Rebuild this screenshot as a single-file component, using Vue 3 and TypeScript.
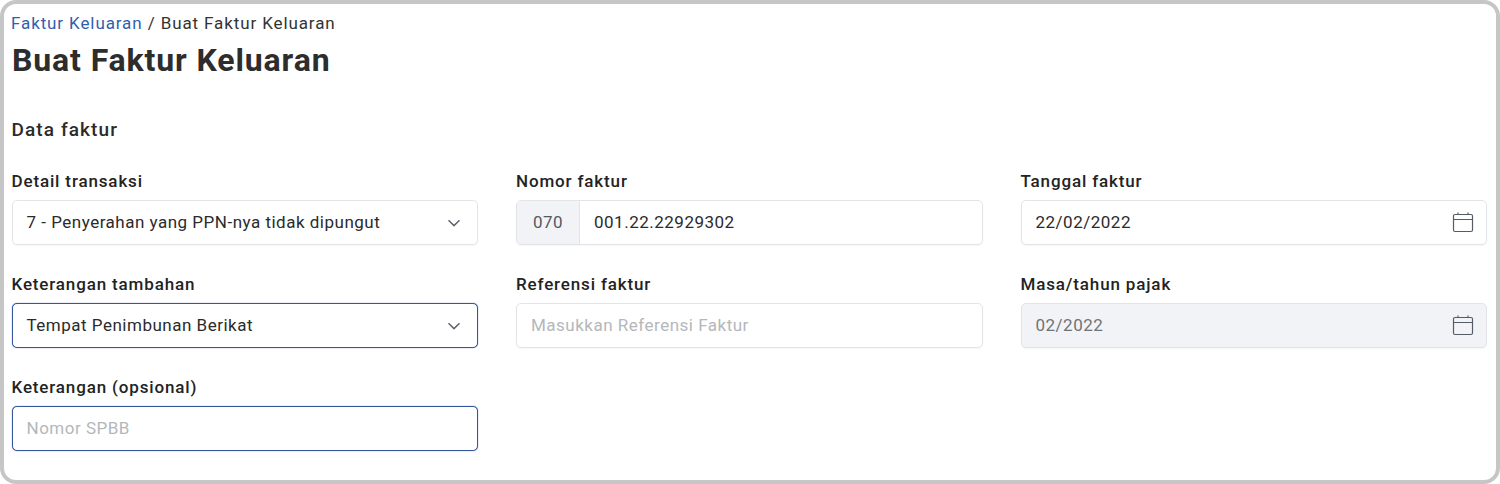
<script setup lang="ts">
interface Field {
  label: string
  value: string
  kind: 'select' | 'prefix' | 'date' | 'input'
  placeholder?: boolean
  focused?: boolean
  disabled?: boolean
  prefix?: string
}

const fields: Field[] = [
  { label: 'Detail transaksi', value: '7 - Penyerahan yang PPN-nya tidak dipungut', kind: 'select' },
  { label: 'Nomor faktur', value: '001.22.22929302', kind: 'prefix', prefix: '070' },
  { label: 'Tanggal faktur', value: '22/02/2022', kind: 'date' },
  { label: 'Keterangan tambahan', value: 'Tempat Penimbunan Berikat', kind: 'select', focused: true },
  { label: 'Referensi faktur', value: 'Masukkan Referensi Faktur', kind: 'input', placeholder: true },
  { label: 'Masa/tahun pajak', value: '02/2022', kind: 'date', disabled: true },
  { label: 'Keterangan (opsional)', value: 'Nomor SPBB', kind: 'input', placeholder: true, focused: true },
]
</script>

<template>
  <div class="frame">
    <nav class="crumbs"><span class="link">Faktur Keluaran</span> / Buat Faktur Keluaran</nav>
    <h1 class="title">Buat Faktur Keluaran</h1>
    <h2 class="section">Data faktur</h2>
    <div class="grid">
      <div v-for="f in fields" :key="f.label" class="field">
        <label class="label">{{ f.label }}</label>
        <div class="control" :class="{ focused: f.focused, disabled: f.disabled }">
          <span v-if="f.prefix" class="prefix">{{ f.prefix }}</span>
          <span class="value" :class="{ placeholder: f.placeholder }">{{ f.value }}</span>
          <svg v-if="f.kind === 'select'" class="chevron" viewBox="0 0 14 8" fill="none">
            <path d="M1.5 1.2 7 6.6l5.5-5.4" stroke="#5f6670" stroke-width="1.5" />
          </svg>
          <svg v-if="f.kind === 'date'" class="calendar" viewBox="0 0 22 21" fill="none">
            <path d="M3 2.5h16a1.5 1.5 0 0 1 1.5 1.5v14a1.5 1.5 0 0 1-1.5 1.5H3A1.5 1.5 0 0 1 1.5 18V4A1.5 1.5 0 0 1 3 2.5ZM1.5 7.5h19M6 .5v2M16 .5v2" stroke="#565c66" stroke-width="1.2" />
          </svg>
        </div>
      </div>
    </div>
  </div>
</template>

<style>
html, body { margin: 0; background: #fff; }
</style>

<style scoped>
.frame {
  box-sizing: border-box;
  width: 1500px;
  height: 484px;
  border: 4px solid #c6c6c6;
  border-radius: 16px;
  padding: 8px 9px 0 8px;
  background: #fff;
  font-family: Roboto, "Liberation Sans", sans-serif;
  color: #2b2b2b;
  overflow: hidden;
}
.crumbs {
  margin-left: -1px;
  font-size: 17px;
  line-height: 22px;
  letter-spacing: 0.89px;
  color: #333;
}
.link { color: #2f5fae; }
.title {
  margin: 5px 0 0;
  font-size: 32px;
  line-height: 42px;
  font-weight: 700;
  letter-spacing: 0.88px;
  color: #2d2d2d;
}
.section {
  margin: 35px 0 0 -0.5px;
  font-size: 19px;
  line-height: 28px;
  font-weight: 500;
  letter-spacing: 1.1px;
  color: #2b2b2b;
}
.grid {
  margin: 27px 0 0 -0.5px;
  display: grid;
  grid-template-columns: repeat(3, 1fr);
  column-gap: 38px;
  row-gap: 29px;
}
.field { display: flex; flex-direction: column; gap: 9px; }
.label {
  font-size: 17px;
  line-height: 20px;
  font-weight: 500;
  letter-spacing: 0.85px;
  color: #232323;
}
.control {
  box-sizing: border-box;
  height: 45px;
  display: flex;
  align-items: center;
  border: 1px solid #e2e4e8;
  border-radius: 5px;
  background: #fff;
  box-shadow: 0 1px 2px rgba(0, 0, 0, 0.04);
  overflow: hidden;
}
.control.focused { border-color: #35589c; box-shadow: 0 0 1px #35589c; }
.control.disabled { background: #f2f3f6; }
.control.disabled .value { color: #6f7378; }
.prefix {
  align-self: stretch;
  width: 63px;
  flex: none;
  display: flex;
  align-items: center;
  justify-content: center;
  padding-bottom: 2px;
  box-sizing: border-box;
  background: #f2f3f6;
  border-right: 1px solid #e2e4e8;
  font-size: 17px;
  letter-spacing: 0.5px;
  color: #555a60;
}
.value {
  flex: 1;
  padding: 0 0 2px 14px;
  font-size: 17px;
  letter-spacing: 0.5px;
  color: #2b2b2b;
  white-space: nowrap;
}
.value.placeholder { color: #b4b7bb; }
.chevron { width: 14px; height: 8px; margin-right: 16px; flex: none; }
.calendar { width: 22px; height: 21px; margin-right: 12px; flex: none; }
</style>
